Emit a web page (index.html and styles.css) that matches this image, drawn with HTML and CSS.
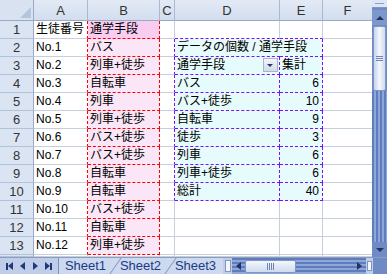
FILE: index.html
```html
<!DOCTYPE html>
<html lang="ja">
<head>
<meta charset="UTF-8">
<title>通学手段</title>
<link rel="stylesheet" href="styles.css">
</head>
<body>
<div class="window">
  <div class="main">
    <div class="sheet">
      <!-- header row -->
      <div class="corner"></div>
      <div class="colhead">A</div>
      <div class="colhead">B</div>
      <div class="colhead">C</div>
      <div class="colhead">D</div>
      <div class="colhead">E</div>
      <div class="colhead last">F</div>

      <div class="rowhead">1</div>
      <div class="cell redr">生徒番号</div>
      <div class="cell bcol btop bhead">通学手段</div>
      <div class="cell"></div>
      <div class="cell pbot"></div>
      <div class="cell pbot"></div>
      <div class="cell last"></div>

      <div class="rowhead">2</div>
      <div class="cell redr">No.1</div>
      <div class="cell bcol">バス</div>
      <div class="cell purr"></div>
      <div class="cell piv title">データの個数 / 通学手段</div>
      <div class="cell pe"></div>
      <div class="cell last"></div>

      <div class="rowhead">3</div>
      <div class="cell redr">No.2</div>
      <div class="cell bcol">列車+徒歩</div>
      <div class="cell purr"></div>
      <div class="cell piv">通学手段<span class="drop"></span></div>
      <div class="cell piv pe">集計</div>
      <div class="cell last"></div>

      <div class="rowhead">4</div>
      <div class="cell redr">No.3</div>
      <div class="cell bcol">自転車</div>
      <div class="cell purr"></div>
      <div class="cell piv">バス</div>
      <div class="cell piv num">6</div>
      <div class="cell last"></div>

      <div class="rowhead">5</div>
      <div class="cell redr">No.4</div>
      <div class="cell bcol">列車</div>
      <div class="cell purr"></div>
      <div class="cell piv">バス+徒歩</div>
      <div class="cell piv num">10</div>
      <div class="cell last"></div>

      <div class="rowhead">6</div>
      <div class="cell redr">No.5</div>
      <div class="cell bcol">列車+徒歩</div>
      <div class="cell purr"></div>
      <div class="cell piv">自転車</div>
      <div class="cell piv num">9</div>
      <div class="cell last"></div>

      <div class="rowhead">7</div>
      <div class="cell redr">No.6</div>
      <div class="cell bcol">バス+徒歩</div>
      <div class="cell purr"></div>
      <div class="cell piv">徒歩</div>
      <div class="cell piv num">3</div>
      <div class="cell last"></div>

      <div class="rowhead">8</div>
      <div class="cell redr">No.7</div>
      <div class="cell bcol">バス+徒歩</div>
      <div class="cell purr"></div>
      <div class="cell piv">列車</div>
      <div class="cell piv num">6</div>
      <div class="cell last"></div>

      <div class="rowhead">9</div>
      <div class="cell redr">No.8</div>
      <div class="cell bcol">自転車</div>
      <div class="cell purr"></div>
      <div class="cell piv">列車+徒歩</div>
      <div class="cell piv num">6</div>
      <div class="cell last"></div>

      <div class="rowhead">10</div>
      <div class="cell redr">No.9</div>
      <div class="cell bcol">自転車</div>
      <div class="cell purr"></div>
      <div class="cell piv">総計</div>
      <div class="cell piv num">40</div>
      <div class="cell last"></div>

      <div class="rowhead">11</div>
      <div class="cell redr">No.10</div>
      <div class="cell bcol">バス+徒歩</div>
      <div class="cell"></div>
      <div class="cell"></div>
      <div class="cell"></div>
      <div class="cell last"></div>

      <div class="rowhead">12</div>
      <div class="cell redr">No.11</div>
      <div class="cell bcol">自転車</div>
      <div class="cell"></div>
      <div class="cell"></div>
      <div class="cell"></div>
      <div class="cell last"></div>

      <div class="rowhead">13</div>
      <div class="cell redr">No.12</div>
      <div class="cell bcol">列車+徒歩</div>
      <div class="cell"></div>
      <div class="cell"></div>
      <div class="cell"></div>
      <div class="cell last"></div>

      <div class="rowhead"></div>
      <div class="cell"></div>
      <div class="cell"></div>
      <div class="cell"></div>
      <div class="cell"></div>
      <div class="cell"></div>
      <div class="cell last"></div>
    </div>

    <div class="vscroll">
      <div class="vsplit"></div>
      <div class="sbtn up"><span class="tri-up"></span></div>
      <div class="vthumb"><span class="grip-h"></span></div>
      <div class="vtrack"></div>
      <div class="sbtn down"><span class="tri-down"></span></div>
    </div>
  </div>

  <div class="tabbar">
    <div class="nav">
      <span class="nbtn"><span class="bar"></span><span class="tri-l"></span></span>
      <span class="nbtn"><span class="tri-l"></span></span>
      <span class="nbtn"><span class="tri-r"></span></span>
      <span class="nbtn"><span class="tri-r"></span><span class="bar"></span></span>
    </div>
    <div class="tabs">
      <span class="tab">Sheet1</span>
      <span class="tab">Sheet2</span>
      <span class="tab">Sheet3</span>
    </div>
    <div class="hsplit"></div>
    <div class="hscroll">
      <span class="hbtn"><span class="tri-l"></span></span>
      <span class="hthumb"><span class="grip-v"></span></span>
      <span class="htrack"></span>
      <span class="hbtn"><span class="tri-r"></span></span>
    </div>
    <div class="hsplit2"></div>
    <div class="sizer"></div>
  </div>
</div>
</body>
</html>
```

FILE: styles.css
```css
body {
    margin: 0;
    overflow: hidden;
    background: #ffffff;
    font-family: "Liberation Sans", "Noto Sans CJK JP", sans-serif;
}

.window {
    width: 387px;
    height: 274px;
    display: flex;
    flex-direction: column;
}

.main {
    display: flex;
    height: 257px;
    flex: none;
}

/* sheet grid */
.sheet {
    width: 372px;
    flex: none;
    display: grid;
    grid-template-columns: 34px 54px 72px 15px 105px 43px 49px;
    grid-template-rows: 21px repeat(13, 18px) 2px;
    overflow: hidden;
}

.sheet > div {
    box-sizing: border-box;
    border-right: 1px solid #c6d0dd;
    border-bottom: 1px solid #c6d0dd;
    font-size: 12px;
    line-height: 17px;
    white-space: nowrap;
    overflow: visible;
    color: #000;
}

.sheet > .last {
    border-right: none;
}

.corner {
    background: #d8e2f0;
    position: relative;
    border-right-color: #9aaac4 !important;
    border-bottom-color: #9aaac4 !important;
}

.corner::after {
    content: "";
    position: absolute;
    right: 2px;
    bottom: 2px;
    border-left: 11px solid transparent;
    border-bottom: 11px solid #b4c4dc;
}

.colhead {
    background: linear-gradient(#e3eaf5, #d2ddee);
    border-bottom-color: #9aaac4 !important;
    border-right-color: #a9b9d2 !important;
    text-align: center;
    font-size: 13px !important;
    line-height: 21px !important;
    color: #333 !important;
}

.rowhead {
    background: #dbe4f2;
    border-right-color: #9aaac4 !important;
    border-bottom-color: #b4c2d8 !important;
    text-align: center;
    font-size: 13px !important;
    color: #333 !important;
}

.cell {
    padding-left: 2px;
}

/* column B outlined with red dashes */
.sheet > .redr {
    border-right: 1px dashed #f00;
}

.sheet > .bcol {
    background: #fbe6f7;
    border-right: 1px dashed #f00;
    border-bottom: 1px dashed #f00;
}

.sheet > .bhead {
    background: #f8cdf0;
}

/* pivot table outlined with purple dashes */
.sheet > .purr {
    border-right: 1px dashed #7a10ff;
}

.sheet > .pbot {
    border-bottom: 1px dashed #7a10ff;
}

.sheet > .piv {
    background: #e6fbfc;
    border-right: 1px dashed #7a10ff;
    border-bottom: 1px dashed #7a10ff;
}

.sheet > .title {
    background: #e6fbfc;
    border-right: none;
    border-bottom: 1px dashed #7a10ff;
    overflow: visible;
    position: relative;
    z-index: 1;
}

.sheet > .pe {
    background: #e6fbfc;
    border-right: 1px dashed #7a10ff;
    border-bottom: 1px dashed #7a10ff;
}

.num {
    text-align: right;
    padding-right: 3px;
}

.drop {
    float: right;
    width: 15px;
    height: 14px;
    margin: 1px 1px 0 0;
    box-sizing: border-box;
    border: 1px solid #a7b5cc;
    background: linear-gradient(#f2f5fa, #d3dbe8);
    position: relative;
}

.drop::after {
    content: "";
    position: absolute;
    left: 3px;
    top: 5px;
    border-left: 3px solid transparent;
    border-right: 3px solid transparent;
    border-top: 3px solid #233a6b;
}

/* vertical scrollbar */
.vscroll {
    width: 15px;
    flex: none;
    display: flex;
    flex-direction: column;
    background: #6f8ac4;
}

.vsplit {
    height: 7px;
    flex: none;
    background: #dde6f4;
    border-bottom: 1px solid #7f95c2;
    position: relative;
}

.vsplit::after {
    content: "";
    position: absolute;
    left: 3px;
    right: 3px;
    top: 3px;
    height: 1px;
    background: #8ea0c8;
}

.sbtn {
    height: 15px;
    flex: none;
    display: flex;
    align-items: center;
    justify-content: center;
}

.up {
    background: #7d96cc;
    margin-top: 2px;
}

.down {
    background: #6f8ac4;
}

.tri-up {
    border-left: 4px solid transparent;
    border-right: 4px solid transparent;
    border-bottom: 4px solid #22335e;
}

.tri-down {
    border-left: 4px solid transparent;
    border-right: 4px solid transparent;
    border-top: 4px solid #22335e;
}

.vthumb {
    height: 65px;
    flex: none;
    margin: 1px 1px 0 1px;
    box-sizing: border-box;
    border-radius: 2px;
    background: linear-gradient(90deg, #c6d3ec, #f4f7fc 50%, #cfdaee);
    border: 1px solid #7f96c6;
    display: flex;
    align-items: center;
    justify-content: center;
}

.grip-h {
    width: 7px;
    height: 5px;
    background: repeating-linear-gradient(#6f84b0 0 1px, transparent 1px 2px);
}

.vtrack {
    flex: 1;
    background: repeating-linear-gradient(90deg, #5f7dbd 0 2px, #8ea6d8 2px 4px);
}

/* bottom tab bar */
.tabbar {
    height: 17px;
    flex: none;
    display: flex;
    align-items: stretch;
    background: #bfcde8;
    border-top: 1px solid #8a9cc0;
    box-sizing: border-box;
    font-size: 13px;
}

.nav {
    width: 58px;
    flex: none;
    display: flex;
    align-items: center;
    justify-content: space-around;
    padding: 0 2px;
    box-sizing: border-box;
}

.nbtn {
    display: flex;
    align-items: center;
}

.bar {
    width: 2px;
    height: 7px;
    background: #203a78;
}

.tri-l {
    border-top: 4px solid transparent;
    border-bottom: 4px solid transparent;
    border-right: 5px solid #203a78;
}

.tri-r {
    border-top: 4px solid transparent;
    border-bottom: 4px solid transparent;
    border-left: 5px solid #203a78;
}

.tabs {
    display: flex;
    width: 166px;
    flex: none;
}

.tab {
    position: relative;
    width: 55px;
    text-align: center;
    line-height: 16px;
    color: #1c3a86;
    background: #ccd9ef;
}

.tab::before {
    content: "";
    position: absolute;
    left: 2px;
    top: 0;
    bottom: 0;
    width: 1px;
    background: #7d92bd;
    transform: skewX(-35deg);
}

.tab:first-child::before {
    left: 0;
    transform: none;
}

.hsplit {
    width: 4px;
    flex: none;
    margin: 2px 1px;
    background: #f4f6fb;
    border: 1px solid #8196c0;
}

.hscroll {
    width: 134px;
    flex: none;
    display: flex;
    align-items: center;
    background: repeating-linear-gradient(#5f7dbd 0 2px, #8ea6d8 2px 4px);
}

.hbtn {
    width: 13px;
    flex: none;
    display: flex;
    justify-content: center;
}

.hbtn .tri-l,
.hbtn .tri-r {
    border-right-color: #22335e;
    border-left-color: #22335e;
}

.hbtn .tri-l {
    border-left: none;
}

.hbtn .tri-r {
    border-right: none;
}

.hthumb {
    width: 51px;
    height: 13px;
    flex: none;
    box-sizing: border-box;
    border: 1px solid #7f96c6;
    border-radius: 2px;
    background: linear-gradient(#f4f7fc, #cfdaee);
    display: flex;
    align-items: center;
    justify-content: center;
}

.grip-v {
    width: 7px;
    height: 7px;
    background: repeating-linear-gradient(90deg, #6f84b0 0 1px, transparent 1px 2px);
}

.htrack {
    flex: 1;
}

.hsplit2 {
    width: 3px;
    flex: none;
    margin: 3px 1px;
    background: #f4f6fb;
    border: 1px solid #8196c0;
}

.sizer {
    flex: 1;
    background: #6f8ac4;
}
```
